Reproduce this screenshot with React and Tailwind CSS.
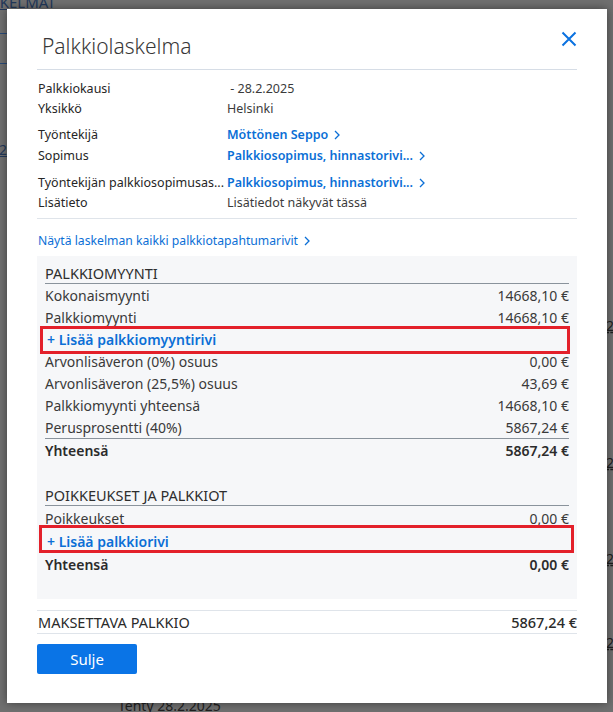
import React from 'react';

const Chevron = () => (
  <svg width="6" height="10" viewBox="0 0 6 10" className="ml-[6px] inline-block shrink-0">
    <polyline points="1,1 5,5 1,9" fill="none" stroke="currentColor" strokeWidth="1.3" />
  </svg>
);

const InfoRow = ({ label, value, link, h = 'h-[20px]' }) => (
  <div className={`grid grid-cols-[190px_1fr] items-center leading-[20px] ${h}`}>
    <span className="truncate pl-[1px] text-[#262626]">{label}</span>
    {link ? (
      <span className="flex items-center font-semibold text-[#0b6fd6]">
        {value}
        <Chevron />
      </span>
    ) : (
      <span className="text-[#3b3b3b]">{value}</span>
    )}
  </div>
);

const Row = ({ label, value, bold, top, h = 'h-[22px]' }) => (
  <div
    className={`flex items-center justify-between pt-[2px] leading-[20px] ${h} ${bold ? 'font-semibold text-[#2b2b2b]' : 'text-[#3a3a3a]'} ${top ? 'border-t border-[#8a939c]' : ''}`}
  >
    <span>{label}</span>
    <span>{value}</span>
  </div>
);

const AddRow = ({ label, boxClass, h = 'h-[22px]' }) => (
  <div className={`relative flex items-center pl-[2px] pt-[2px] leading-[20px] font-semibold text-[#0b6fd6] ${h}`}>
    + {label}
    <div className={`pointer-events-none absolute border-[3px] border-[#e3202a] ${boxClass}`} />
  </div>
);

const SectionHead = ({ children }) => (
  <div className="h-[23px] border-b border-[#8a939c] pt-[2px] text-[14.5px] leading-[20px] text-[#2e2e2e]">{children}</div>
);

export default function App() {
  return (
    <div className="relative h-[712px] w-full overflow-hidden bg-[#707070] font-['Noto_Sans',sans-serif] text-[#333]">
      {/* page behind the dimmed overlay */}
      <div className="absolute left-[-26px] top-[-9px] text-[15px] text-[#22385a] underline">LASKELMAT</div>
      <div className="absolute left-0 top-[33px] h-px w-[7px] bg-[#2a4a78]" />
      <div className="absolute left-0 top-[63px] h-px w-[7px] bg-[#2a4a78]" />
      <div className="absolute left-[-1px] top-[139px] text-[14px] text-[#22385a] underline">25</div>
      <div className="absolute left-[606px] top-[315px] text-[14px] text-[#1f1f1f] underline decoration-dashed">25</div>
      <div className="absolute left-[606px] top-[452px] text-[14px] text-[#1f1f1f] underline decoration-dashed">25</div>
      <div className="absolute left-[606px] top-[548px] text-[14px] text-[#1f1f1f] underline decoration-dashed">25</div>
      <div className="absolute left-[606px] top-[632px] text-[14px] text-[#1f1f1f] underline decoration-dashed">25</div>
      <div className="absolute left-[118px] top-[695px] text-[14px] text-[#1f1f1f]">Tehty 28.2.2025</div>

      {/* modal */}
      <div className="absolute left-[7px] top-[9px] flex h-[694px] w-[600px] flex-col bg-white px-[30px] shadow-[0_0_9px_rgba(0,0,0,0.45)]">
        <div className="flex h-[61px] shrink-0 items-start justify-between border-b border-[#d6dde6] pl-[5px] pt-[22px]">
          <h2 className="text-[21px] font-light leading-[30px] text-[#383838]">Palkkiolaskelma</h2>
          <button className="text-[#0b72e0]">
            <svg width="16" height="16" viewBox="0 0 16 16">
              <path d="M1.5 1.5 L14.5 14.5 M14.5 1.5 L1.5 14.5" stroke="currentColor" strokeWidth="2" fill="none" />
            </svg>
          </button>
        </div>

        <div className="border-b border-[#dfe4ea] pb-[5px] pt-[9px] text-[12.5px]">
          <InfoRow label="Palkkiokausi" value={'\u00a0- 28.2.2025'} />
          <InfoRow label="Yksikkö" value="Helsinki" />
          <div className="mt-[6px]">
            <InfoRow label="Työntekijä" value="Möttönen Seppo" link />
            <InfoRow label="Sopimus" value="Palkkiosopimus, hinnastorivi..." link h="h-[21px]" />
          </div>
          <div className="mt-[6px]">
            <InfoRow label="Työntekijän palkkiosopimusas..." value="Palkkiosopimus, hinnastorivi..." link h="h-[21px]" />
            <InfoRow label="Lisätieto" value="Lisätiedot näkyvät tässä" />
          </div>
        </div>

        <div className="mt-[12px] flex h-[20px] items-center pl-[1px] text-[12.2px] leading-[20px] text-[#0b6fd6]">
          Näytä laskelman kaikki palkkiotapahtumarivit
          <Chevron />
        </div>

        <div className="mt-[5px] bg-[#f6f7f9] px-[8px] pb-[24px] pt-[5px] text-[14px]">
          <SectionHead>PALKKIOMYYNTI</SectionHead>
          <Row label="Kokonaismyynti" value="14668,10 €" />
          <Row label="Palkkiomyynti" value="14668,10 €" />
          <AddRow label="Lisää palkkiomyyntirivi" boxClass="-left-[5px] -right-[1px] -top-[2px] -bottom-[4px]" />
          <Row label="Arvonlisäveron (0%) osuus" value="0,00 €" />
          <Row label="Arvonlisäveron (25,5%) osuus" value="43,69 €" />
          <Row label="Palkkiomyynti yhteensä" value="14668,10 €" />
          <Row label="Perusprosentti (40%)" value="5867,24 €" />
          <Row label="Yhteensä" value="5867,24 €" bold top h="h-[23px]" />

          <div className="mt-[22px]">
            <SectionHead>POIKKEUKSET JA PALKKIOT</SectionHead>
            <Row label="Poikkeukset" value="0,00 €" h="h-[23px]" />
            <AddRow label="Lisää palkkiorivi" boxClass="-left-[6px] -right-[5px] -top-[4px] -bottom-[1px]" h="h-[23px]" />
            <Row label="Yhteensä" value="0,00 €" bold h="h-[23px]" />
          </div>
        </div>

        <div className="mt-[11px] flex h-[24px] items-center justify-between border-y border-[#dfe4ea] pl-[1px] pt-[1px] text-[14.5px] text-[#2a2a2a]">
          <span>MAKSETTAVA PALKKIO</span>
          <span className="font-medium">5867,24 €</span>
        </div>

        <button className="mt-[10px] h-[30px] w-[100px] rounded-[2px] bg-[#0a74e6] text-[15px] text-white">Sulje</button>
      </div>
    </div>
  );
}
